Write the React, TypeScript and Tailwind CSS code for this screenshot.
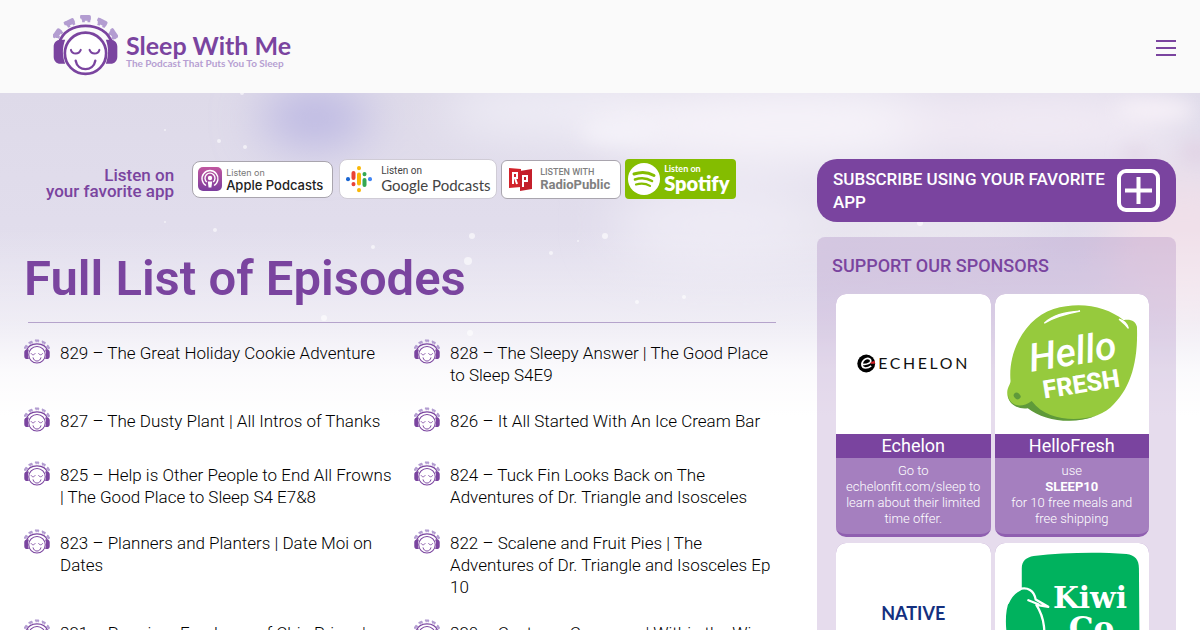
import React from 'react';

interface Episode {
  number: number;
  title: string;
}

interface Sponsor {
  name: string;
  logo: React.ReactNode;
  offer: React.ReactNode;
}

const SHEEP = [
  { x: 54, y: 86, angle: -55 },
  { x: 90, y: 54, angle: -25 },
  { x: 137, y: 41, angle: 0 },
  { x: 185, y: 54, angle: 25 },
  { x: 218, y: 88, angle: 55 },
];

const STARS = [
  [165, 130, 1], [219, 141, 2], [165, 222, 1], [215, 230, 2], [472, 236, 3], [551, 253, 2],
  [468, 261, 4], [605, 236, 3], [578, 241, 1], [373, 247, 2], [470, 333, 3], [324, 318, 3],
  [637, 302, 2], [684, 297, 2], [688, 180, 2], [920, 223, 3], [245, 147, 2], [242, 93, 2],
];

const FaceLogo: React.FC<{ className?: string }> = ({ className }) => (
  <svg viewBox="40 28 192 183" className={className} fill="none" aria-hidden="true">
    {SHEEP.map(({ x, y, angle }) => (
      <g key={x} transform={`translate(${x} ${y}) rotate(${angle})`} fill="#b39dd1">
        <rect x="-13" y="-10" width="28" height="17" rx="5" />
        <rect x="-17" y="-10" width="10" height="11" rx="3" />
        <path d="M-11 4h8v7h-8zM5 4h8v7H5z" />
      </g>
    ))}
    <g stroke="#7a449f" strokeLinecap="round">
      <path d="M58 114C68 80 100 63 136 63s68 17 78 51" strokeWidth="8" />
      <circle cx="136" cy="144" r="61" fill="#fff" strokeWidth="8" />
      <path d="M93 134c4 14 24 14 29 0M148 134c5 14 25 14 29 0" strokeWidth="6" />
      <path d="M107 166c6 33 52 33 58 0" strokeWidth="7" />
    </g>
    <path
      d="M76 104H62c-12 0-20 9-20 20v30c0 12 8 21 20 21h14c-9-23-9-48 0-71zM196 104h14c12 0 20 9 20 20v30c0 12-8 21-20 21h-14c9-23 9-48 0-71z"
      fill="#7a449f"
    />
  </svg>
);

const Sky = () => (
  <svg
    className="absolute inset-x-0 top-0 -z-10 h-[340px] w-full"
    viewBox="0 93 1200 340"
    preserveAspectRatio="none"
    aria-hidden="true"
  >
    <defs>
      <linearGradient id="sky" x1="0" y1="0" x2="0" y2="1">
        <stop offset="0" stopColor="#dedae9" />
        <stop offset="0.5" stopColor="#e2deed" />
        <stop offset="1" stopColor="#e6e2ef" />
      </linearGradient>
      <linearGradient id="fade" x1="0" y1="0" x2="0" y2="1">
        <stop offset="0.4" stopColor="#fff" stopOpacity="0" />
        <stop offset="0.68" stopColor="#fff" stopOpacity="0.45" />
        <stop offset="0.82" stopColor="#fff" stopOpacity="0.85" />
        <stop offset="0.95" stopColor="#fff" />
      </linearGradient>
      <filter id="soft" x="-50%" y="-100%" width="200%" height="300%">
        <feGaussianBlur stdDeviation="24" />
      </filter>
      <filter id="wisp" x="-50%" y="-100%" width="200%" height="300%">
        <feGaussianBlur stdDeviation="9" />
      </filter>
    </defs>
    <rect y="93" width="1200" height="340" fill="url(#sky)" />
    <g filter="url(#soft)">
      <ellipse cx="315" cy="118" rx="55" ry="28" fill="#b9b5e2" />
      <ellipse cx="560" cy="110" rx="120" ry="30" fill="#efedf6" />
      <ellipse cx="790" cy="125" rx="210" ry="42" fill="#f6f3f9" />
      <ellipse cx="720" cy="225" rx="110" ry="40" fill="#eeebf5" />
      <ellipse cx="1040" cy="125" rx="150" ry="35" fill="#f2ebf5" />
      <ellipse cx="920" cy="228" rx="140" ry="16" fill="#f0edf2" />
      <ellipse cx="1185" cy="250" rx="80" ry="80" fill="#f0e0ea" />
    </g>
    <g filter="url(#wisp)">
      <ellipse cx="1155" cy="110" rx="40" ry="10" fill="#f7f1f8" />
      <ellipse cx="1196" cy="152" rx="14" ry="10" fill="#e2d2e4" />
      <ellipse cx="1135" cy="154" rx="12" ry="5" fill="#dfcfe2" />
      <ellipse cx="620" cy="132" rx="40" ry="10" fill="#f4f2f9" />
    </g>
    <rect y="93" width="1200" height="340" fill="url(#fade)" />
    {STARS.map(([x, y, r]) => (
      <circle key={`${x}-${y}`} cx={x} cy={y} r={r} fill="#fff" opacity="0.6" />
    ))}
  </svg>
);

const Header = () => (
  <header className="flex items-center justify-between bg-[#fafafa] pl-[53px] pr-6 h-[93px]">
    <a href="#home" className="flex items-center pb-1">
      <FaceLogo className="h-[62px] w-[65px]" />
      <span className="ml-2 flex flex-col pt-3 font-['Lato',sans-serif]">
        <span className="text-[25px] leading-6 font-bold text-[#7a449f]">Sleep With Me</span>
        <span className="text-[10px] leading-3 font-bold text-[#b69fd2]">
          The Podcast That Puts You To Sleep
        </span>
      </span>
    </a>
    <button type="button" aria-label="Menu" className="flex w-5 flex-col gap-[5px] pt-[3px]">
      <span className="h-[2px] bg-[#7a449f]" />
      <span className="h-[2px] bg-[#7a449f]" />
      <span className="h-[2px] bg-[#7a449f]" />
    </button>
  </header>
);

const ListenBadges = () => (
  <div className="flex items-center pl-[22px]">
    <p className="mr-[18px] pt-2 text-right text-[17px] leading-4 font-medium text-[#7a449f]">
      Listen on
      <br />
      your favorite app
    </p>
    <div className="flex items-center gap-1">
      <a
        href="#apple"
        className="mr-[2px] flex h-[37px] w-[141px] items-center gap-1 rounded-lg border border-[#a9a5ae] bg-white pl-[5px]"
      >
        <svg viewBox="0 0 24 24" className="size-6 shrink-0" fill="none" aria-hidden="true">
          <defs>
            <linearGradient id="apple" x1="0" y1="0" x2="0" y2="1">
              <stop offset="0" stopColor="#c0569f" />
              <stop offset="1" stopColor="#7b3d9e" />
            </linearGradient>
          </defs>
          <rect width="24" height="24" rx="5" fill="url(#apple)" />
          <path d="M8 18.500a8 8 0 1 1 8 0" stroke="#fff" strokeWidth="1.400" />
          <path d="M8.800 15a5 5 0 1 1 6.400 0" stroke="#fff" strokeWidth="1.400" />
          <circle cx="12" cy="11" r="2.200" fill="#fff" />
          <path d="M9.800 14.500h4.400l-.8 6h-2.800z" fill="#fff" />
        </svg>
        <span className="flex flex-col whitespace-nowrap font-['Inter',sans-serif] text-[#222]">
          <span className="text-[9px] leading-[11px] text-[#777]">Listen on</span>
          <span className="text-[13px] leading-[14px] font-medium">Apple Podcasts</span>
        </span>
      </a>
      <a
        href="#google"
        className="flex h-10 w-[158px] items-center gap-2 rounded-lg border border-[#d0ccd6] bg-white pl-[5px]"
      >
        <svg viewBox="0 0 28 28" className="size-7 shrink-0" strokeWidth="4" strokeLinecap="round" aria-hidden="true">
          <path d="M3 14v.2" stroke="#1a66d2" />
          <path d="M8.500 8v5M8.500 19v.2" stroke="#ea4335" />
          <path d="M14 3v.2M14 9.500v9M14 25v.2" stroke="#fab908" />
          <path d="M19.500 9v.2M19.500 15v5" stroke="#34a853" />
          <path d="M25 14v.2" stroke="#4285f4" />
        </svg>
        <span className="flex flex-col whitespace-nowrap text-[#444]">
          <span className="text-[10px] leading-3">Listen on</span>
          <span className="font-['Lato',sans-serif] text-[15px] leading-4">Google Podcasts</span>
        </span>
      </a>
      <a
        href="#radiopublic"
        className="flex h-[39px] w-[120px] items-center gap-2 rounded-md border border-[#a9a5ae] bg-white pl-[7px]"
      >
        <svg viewBox="0 0 23 24" className="h-6 w-[23px] shrink-0" aria-hidden="true">
          <path d="M0 1l12 1v18L0 21z" fill="#d2232a" />
          <path d="M11 4l12-2v20l-12 2z" fill="#c41f2b" />
          <path d="M4 17V6h4v5H4M6 11l2 6M14 20V9h4v5h-4" fill="none" stroke="#fff" strokeWidth="2" />
        </svg>
        <span className="flex flex-col whitespace-nowrap text-[#808080]">
          <span className="text-[9px] leading-[11px] font-medium">LISTEN WITH</span>
          <span className="text-[13px] leading-[13px] font-bold">RadioPublic</span>
        </span>
      </a>
      <a
        href="#spotify"
        className="flex h-10 w-[111px] items-center gap-1 rounded-[4px] bg-[#84bd00] pl-[3px] text-white"
      >
        <svg viewBox="0 0 32 32" className="size-8 shrink-0" fill="none" aria-hidden="true">
          <circle cx="16" cy="16" r="16" fill="#fff" />
          <g stroke="#84bd00" strokeLinecap="round">
            <path d="M6 11c7-2.500 14-2 20 1.500" strokeWidth="3" />
            <path d="M7 16.500c6-2 12-1.400 17 1.500" strokeWidth="2.600" />
            <path d="M8 21.500c5-1.500 10-1 14 1.400" strokeWidth="2.200" />
          </g>
        </svg>
        <span className="flex flex-col whitespace-nowrap font-['Lato',sans-serif] font-bold">
          <span className="text-[9px] leading-[9px]">Listen on</span>
          <span className="text-[20px] leading-[21px] font-extrabold">Spotify</span>
        </span>
      </a>
    </div>
  </div>
);

const episodes: Episode[] = [
  { number: 829, title: 'The Great Holiday Cookie Adventure' },
  { number: 828, title: 'The Sleepy Answer | The Good Place to Sleep S4E9' },
  { number: 827, title: 'The Dusty Plant | All Intros of Thanks' },
  { number: 826, title: 'It All Started With An Ice Cream Bar' },
  { number: 825, title: 'Help is Other People to End All Frowns | The Good Place to Sleep S4 E7&8' },
  { number: 824, title: 'Tuck Fin Looks Back on The Adventures of Dr. Triangle and Isosceles' },
  { number: 823, title: 'Planners and Planters | Date Moi on Dates' },
  { number: 822, title: 'Scalene and Fruit Pies | The Adventures of Dr. Triangle and Isosceles Ep 10' },
  { number: 821, title: 'Premium Employee of Chip Prime |' },
  { number: 820, title: 'Costume Company | Within the Wine' },
];

const EpisodeList = () => (
  <ul className="mt-4 grid grid-cols-2 gap-y-[21px]">
    {episodes.map(({ number, title }) => (
      <li key={number} className="flex min-h-[33px] items-start gap-[10px] pr-5">
        <FaceLogo className="h-[25px] w-[26px] shrink-0" />
        <a href={`#episode-${number}`} className="pt-[3px] text-[17px] leading-[22px] font-light text-black">
          {`${number} – ${title}`}
        </a>
      </li>
    ))}
  </ul>
);

const EchelonLogo = () => (
  <svg viewBox="18 27 462 423" className="h-[140px] w-full" aria-hidden="true">
    <circle cx="107" cy="237" r="27" fill="#000" />
    <path d="M94 240c22 0 32-8 24-16-10-8-26 6-24 18 2 12 18 10 28 2" fill="none" stroke="#fff" strokeWidth="5" />
    <path d="M120 233l13-4v9h-12z" fill="#d2232a" />
    <text x="143" y="254" fontSize="48" letterSpacing="8" fill="#111" fontFamily="Lato, sans-serif">
      ECHELON
    </text>
  </svg>
);

const HelloFreshLogo = () => (
  <svg viewBox="492 27 465 423" className="h-[140px] w-full" aria-hidden="true">
    <path
      d="M538 290c-8-90 44-190 130-218 80-24 160-8 212 34 22-4 36 4 40 20 4 110-20 190-80 244-60 50-190 56-240-8-36 20-72-4-72-36 0-18 10-26 10-36z"
      fill="#96ca3d"
    />
    <path d="M530 330c4 36 40 44 72 20 46 62 140 62 196 44-70 30-160 16-208-22-30 4-60-12-60-42z" fill="#5f9a3a" />
    <ellipse cx="558" cy="335" rx="11" ry="9" fill="#5f9a3a" transform="rotate(40 558 335)" />
    <path d="M640 115c28-26 64-34 108-36-42 8-74 16-108 36zM866 103c14 4 24 12 28 28-10-14-18-20-28-28z" fill="#fff" stroke="#fff" strokeWidth="4" />
    <g fill="#fff" fontFamily="Roboto, sans-serif">
      <text
        x="600"
        y="262"
        fontSize="118"
        fontStyle="italic"
        fontWeight="500"
        transform="rotate(-9 600 262)"
      >
        Hello
      </text>
      <text x="640" y="343" fontSize="76" fontWeight="800" transform="rotate(-9 640 343)">
        FRESH
      </text>
    </g>
  </svg>
);

const NativeLogo = () => (
  <div className="flex h-[140px] items-center justify-center font-['Lato',sans-serif] text-[18px] font-bold text-[#14307f]">
    NATIVE
  </div>
);

const KiwiCoLogo = () => (
  <svg viewBox="492 339 465 423" className="h-[140px] w-full" aria-hidden="true">
    <path
      d="M572 480v-64c0-24 14-34 36-38 90-10 190-12 280-6 26 4 38 16 38 44l2 270c0 20-10 30-30 30H620c-60 0-96-60-96-140 0-60 20-90 48-96z"
      fill="#00b25e"
    />
    <path
      d="M560 480c30-12 50 4 54 30l38 22-36-6c26 40 30 90 16 130M592 512l30 12M530 520c10-24 22-34 36-40"
      fill="none"
      stroke="#fff"
      strokeWidth="7"
      strokeLinecap="round"
      strokeLinejoin="round"
    />
    <g fill="#fff" fontFamily="'DejaVu Serif', serif" fontWeight="700">
      <text x="666" y="536" fontSize="90">
        Kiwi
      </text>
      <text x="714" y="630" fontSize="94">
        Co
      </text>
    </g>
  </svg>
);

const sponsors: Sponsor[] = [
  {
    name: 'Echelon',
    logo: <EchelonLogo />,
    offer: 'Go to echelonfit.com/sleep to learn about their limited time offer.',
  },
  {
    name: 'HelloFresh',
    logo: <HelloFreshLogo />,
    offer: (
      <>
        use
        <br />
        <strong className="font-bold">SLEEP10</strong>
        <br />
        for 10 free meals and free shipping
      </>
    ),
  },
  { name: 'Native', logo: <NativeLogo />, offer: 'Visit nativedeodorant.com' },
  { name: 'KiwiCo', logo: <KiwiCoLogo />, offer: 'Visit kiwico.com/sleep' },
];

const Sidebar = () => (
  <aside className="w-[359px] shrink-0">
    <button
      type="button"
      className="flex w-full items-center justify-between rounded-[20px] bg-[#7a449f] py-2 pr-4 pl-4 text-left text-white"
    >
      <span className="text-[17px] leading-[23px] font-medium">SUBSCRIBE USING YOUR FAVORITE APP</span>
      <svg viewBox="0 0 43 43" className="my-[2px] size-[43px] shrink-0" fill="none" stroke="#fff" strokeWidth="4" aria-hidden="true">
        <rect x="2" y="2" width="39" height="39" rx="7" />
        <path d="M8 21.500h27M21.500 8v27" />
      </svg>
    </button>
    <section className="mt-[15px] rounded-lg bg-[#7a449f]/19 px-[15px] pt-4 pb-4">
      <h2 className="text-[18px] leading-[25px] font-medium text-[#7a449f]">SUPPORT OUR SPONSORS</h2>
      <div className="mt-4 mr-3 ml-1 grid grid-cols-2 gap-x-1 gap-y-[6px]">
        {sponsors.map(({ name, logo, offer }) => (
          <a
            key={name}
            href={`#${name}`}
            className="overflow-hidden rounded-[10px] border-b-3 border-[#8f5fb0] bg-[#a57fbf] text-center text-white"
          >
            <div className="bg-white">{logo}</div>
            <div className="bg-[#7a449f] text-[18px] leading-6">{name}</div>
            <p className="px-2 pt-[5px] pb-[7px] text-[13px] leading-4 font-light">{offer}</p>
          </a>
        ))}
      </div>
    </section>
  </aside>
);

const App: React.FC = () => {
  return (
    <div className="h-screen overflow-hidden bg-white font-['Roboto',sans-serif]">
      <Header />
      <div className="relative isolate flex gap-[13px] px-6 pt-[66px]">
        <Sky />
        <main className="min-w-0 flex-1">
          <ListenBadges />
          <h1 className="mt-12 text-[49px] leading-[64px] font-semibold text-[#7a449f]">
            Full List of Episodes
          </h1>
          <hr className="mt-[11px] mr-7 ml-1 border-[#b5a3cb]" />
          <EpisodeList />
        </main>
        <Sidebar />
      </div>
    </div>
  );
};

export default App;
